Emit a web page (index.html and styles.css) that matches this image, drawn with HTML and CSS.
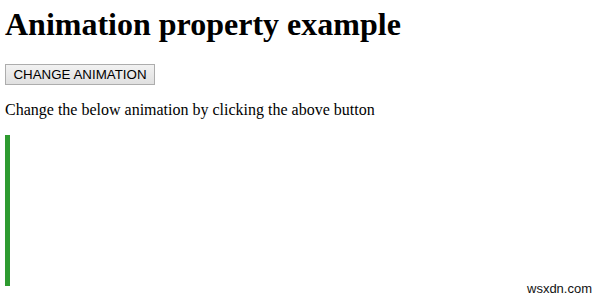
FILE: index.html
```html
<!DOCTYPE html>
<html>
<head>
<meta charset="utf-8">
<link rel="stylesheet" href="styles.css">
</head>
<body>
<h1 class="title">Animation property example</h1>
<div class="actions"><button class="btn">CHANGE ANIMATION</button></div>
<p class="note">Change the below animation by clicking the above button</p>
<div class="bar"></div>
<div class="watermark">wsxdn.com</div>
</body>
</html>
```
FILE: styles.css
```css
html, body {
  margin: 0;
  padding: 0;
  background: #fff;
}
body {
  padding: 1px 5px 0;
  font-family: "Liberation Serif", "Times New Roman", serif;
  color: #000;
  position: relative;
  width: 590px;
  height: 296px;
  overflow: hidden;
}
.title {
  font-size: 32px;
  font-weight: bold;
  margin: 5px 0 21px;
  line-height: 37px;
}
.actions {
  display: block;
  height: 21px;
}
.btn {
  font-family: "Liberation Sans", Arial, sans-serif;
  font-size: 13.33px;
  height: 21px;
  width: 150px;
  padding: 0 6px;
  border: 1px solid #adadad;
  background: linear-gradient(#f2f2f2, #e0e0e0);
  color: #000;
  margin: 0;
}
.note {
  font-size: 16px;
  margin: 16px 0;
  line-height: 18px;
}
.bar {
  width: 5px;
  height: 151px;
  background: #2e9b30;
}
.watermark {
  position: absolute;
  left: 527px;
  top: 281px;
  font-family: "Liberation Sans", Arial, sans-serif;
  font-size: 13px;
  color: #111;
}
```
